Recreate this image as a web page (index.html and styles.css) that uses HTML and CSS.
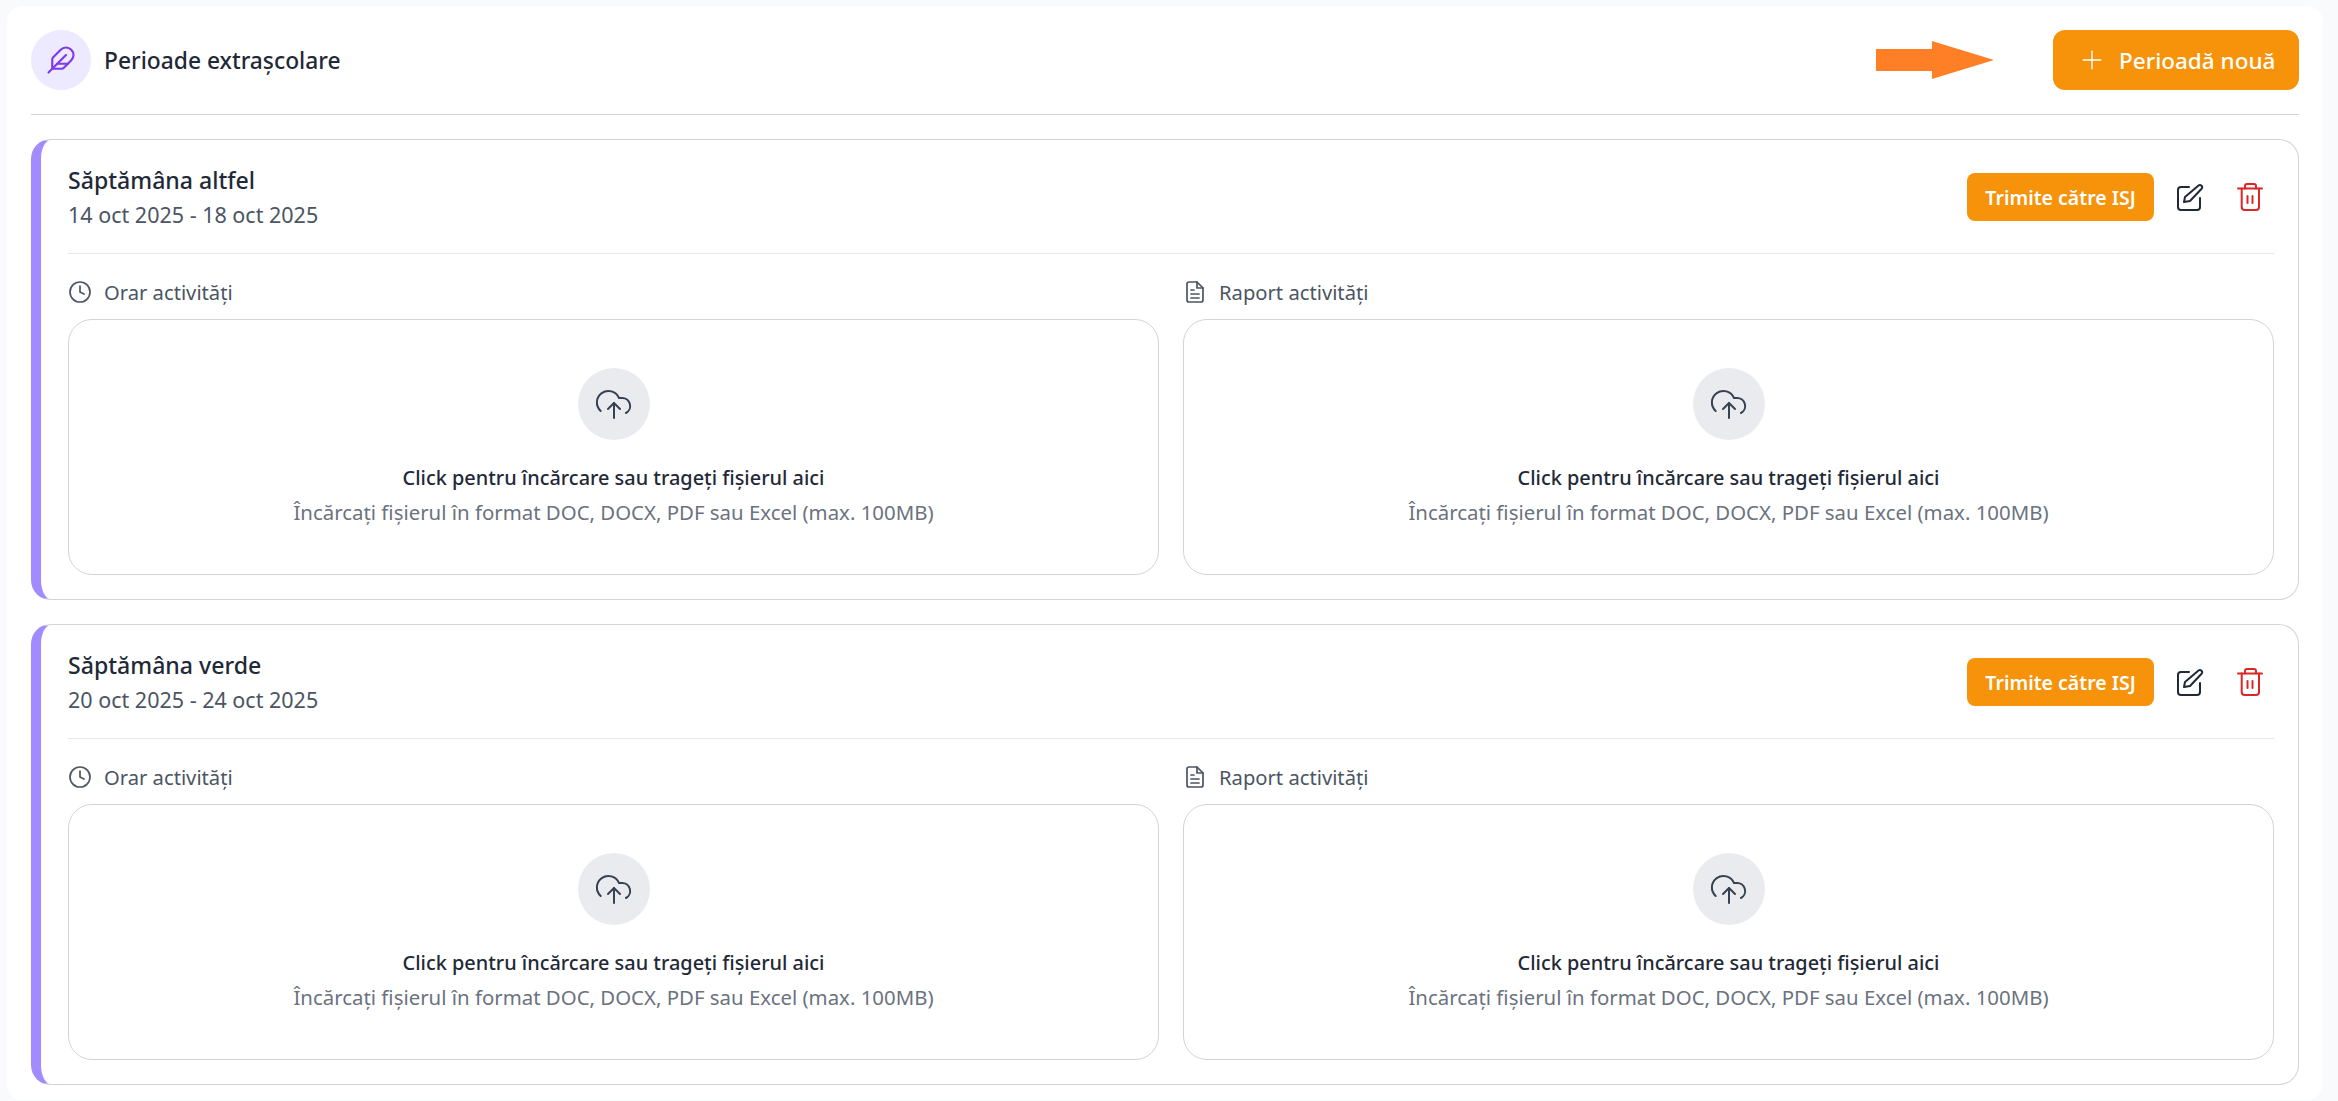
FILE: index.html
```html
<!DOCTYPE html>
<html lang="ro">
<head>
  <meta charset="UTF-8">
  <meta name="viewport" content="width=device-width, initial-scale=1.0">
  <title>Perioade extrașcolare</title>
  <link rel="stylesheet" href="styles.css">
</head>
<body>
  <svg class="icon-defs" width="0" height="0">
    <symbol id="i-feather" viewBox="0 0 24 24"><path d="M12.67 19a2 2 0 0 0 1.416-.588l6.154-6.172a6 6 0 0 0-8.49-8.49L5.586 9.914A2 2 0 0 0 5 11.328V18a1 1 0 0 0 1 1z"/><path d="M16 8 2 22"/><path d="M17.5 15H9"/></symbol>
    <symbol id="i-plus" viewBox="0 0 24 24"><path d="M12 2.5v19"/><path d="M2.500 12h19"/></symbol>
    <symbol id="i-edit" viewBox="0 0 28 28"><path d="M13 4H5a3 3 0 0 0-3 3v17a3 3 0 0 0 3 3h16a3 3 0 0 0 3-3v-9"/><path d="M8 19l1-5L22.500 2.600a2.200 2.200 0 0 1 3.100 3.100L14 18z"/></symbol>
    <symbol id="i-trash" viewBox="0 0 28 28"><path d="M2 5.500h24"/><path d="M5.700 5.500V24a3 3 0 0 0 3 3H20a3 3 0 0 0 3-3V5.500"/><path d="M9 5.500V3a2 2 0 0 1 2-2h7a2 2 0 0 1 2 2v2.500"/><path d="M11.500 13v7"/><path d="M16.500 13v7"/></symbol>
    <symbol id="i-clock" viewBox="0 0 24 24"><circle cx="12" cy="12" r="10"/><path d="M12 6v6l4 2"/></symbol>
    <symbol id="i-doc" viewBox="0 0 24 24"><path d="M14 2H6a2 2 0 0 0-2 2v16a2 2 0 0 0 2 2h12a2 2 0 0 0 2-2V8z"/><path d="M14 2v6h6"/><path d="M8 10h3"/><path d="M8 14h8"/><path d="M8 18h8"/></symbol>
    <symbol id="i-upload" viewBox="0 0 40 40"><path d="M6.700 27A11.500 11.500 0 1 1 25 14h3a8 8 0 0 1 4 15"/><path d="M20 19v15"/><path d="m14 25 6-6 6 6"/></symbol>
  </svg>

  <main class="panel">
    <header class="panel-head">
      <div class="panel-title">
        <span class="title-icon"><svg class="icon"><use href="#i-feather"/></svg></span>
        <h1>Perioade extrașcolare</h1>
      </div>
      <div class="panel-actions">
        <svg class="arrow" width="118" height="38" viewBox="0 0 118 38"><path d="M0 8h56V0l62 19-62 19v-8H0z"/></svg>
        <button class="btn-new"><svg class="icon"><use href="#i-plus"/></svg>Perioadă nouă</button>
      </div>
    </header>

    <section class="period">
      <div class="period-head">
        <div>
          <h2>Săptămâna altfel</h2>
          <p class="dates">14 oct 2025 - 18 oct 2025</p>
        </div>
        <div class="period-actions">
          <button class="btn-send">Trimite către ISJ</button>
          <svg class="icon icon-edit"><use href="#i-edit"/></svg>
          <svg class="icon icon-trash"><use href="#i-trash"/></svg>
        </div>
      </div>
      <div class="uploads">
        <div class="upload-col">
          <div class="upload-label"><svg class="icon"><use href="#i-clock"/></svg>Orar activități</div>
          <div class="dropzone">
            <span class="drop-icon"><svg class="icon"><use href="#i-upload"/></svg></span>
            <p class="drop-main">Click pentru încărcare sau trageți fișierul aici</p>
            <p class="drop-hint">Încărcați fișierul în format DOC, DOCX, PDF sau Excel (max. 100MB)</p>
          </div>
        </div>
        <div class="upload-col">
          <div class="upload-label"><svg class="icon"><use href="#i-doc"/></svg>Raport activități</div>
          <div class="dropzone">
            <span class="drop-icon"><svg class="icon"><use href="#i-upload"/></svg></span>
            <p class="drop-main">Click pentru încărcare sau trageți fișierul aici</p>
            <p class="drop-hint">Încărcați fișierul în format DOC, DOCX, PDF sau Excel (max. 100MB)</p>
          </div>
        </div>
      </div>
    </section>

    <section class="period">
      <div class="period-head">
        <div>
          <h2>Săptămâna verde</h2>
          <p class="dates">20 oct 2025 - 24 oct 2025</p>
        </div>
        <div class="period-actions">
          <button class="btn-send">Trimite către ISJ</button>
          <svg class="icon icon-edit"><use href="#i-edit"/></svg>
          <svg class="icon icon-trash"><use href="#i-trash"/></svg>
        </div>
      </div>
      <div class="uploads">
        <div class="upload-col">
          <div class="upload-label"><svg class="icon"><use href="#i-clock"/></svg>Orar activități</div>
          <div class="dropzone">
            <span class="drop-icon"><svg class="icon"><use href="#i-upload"/></svg></span>
            <p class="drop-main">Click pentru încărcare sau trageți fișierul aici</p>
            <p class="drop-hint">Încărcați fișierul în format DOC, DOCX, PDF sau Excel (max. 100MB)</p>
          </div>
        </div>
        <div class="upload-col">
          <div class="upload-label"><svg class="icon"><use href="#i-doc"/></svg>Raport activități</div>
          <div class="dropzone">
            <span class="drop-icon"><svg class="icon"><use href="#i-upload"/></svg></span>
            <p class="drop-main">Click pentru încărcare sau trageți fișierul aici</p>
            <p class="drop-hint">Încărcați fișierul în format DOC, DOCX, PDF sau Excel (max. 100MB)</p>
          </div>
        </div>
      </div>
    </section>
  </main>
</body>
</html>
```

FILE: styles.css
```css
html, body {
  height: 100%;
}

body {
  font-family: 'Noto Sans', sans-serif;
  background: #f9fafb;
  color: #1f2937;
  margin: 0;
  padding: 6px 15px 0 7px;
  box-sizing: border-box;
  overflow: hidden;
}

h1, h2, p {
  margin: 0;
  font-weight: 500;
}

button {
  font-family: inherit;
  border: none;
  color: #fff;
  background: #f7930a;
}

.icon-defs {
  position: absolute;
}

.icon {
  display: block;
  fill: none;
  stroke: currentColor;
  stroke-width: 1.7;
  stroke-linecap: round;
  stroke-linejoin: round;
}

.panel {
  background: #fff;
  border-radius: 16px;
  padding: 24px 24px 16px;
  height: 1094px;
  box-sizing: border-box;
}

.panel-head {
  display: flex;
  justify-content: space-between;
  align-items: center;
  padding-bottom: 24px;
  border-bottom: 1px solid #d1d5db;
  margin-bottom: 24px;
}

.panel-title {
  display: flex;
  align-items: center;
  gap: 13px;
}

.title-icon {
  width: 60px;
  height: 60px;
  border-radius: 50%;
  background: #ede9fe;
  color: #7c3aed;
  display: flex;
  align-items: center;
  justify-content: center;
}

.title-icon .icon {
  width: 30px;
  height: 30px;
}

h1 {
  font-size: 22.8px;
  color: #1f2937;
}

.panel-actions {
  display: flex;
  align-items: center;
  gap: 59px;
}

.arrow {
  fill: #ff7f27;
}

.btn-new {
  display: flex;
  align-items: center;
  gap: 16px;
  width: 246px;
  height: 60px;
  padding: 0 0 0 28px;
  border-radius: 12px;
  font-size: 22.5px;
  font-weight: 500;
}

.btn-new .icon {
  width: 22px;
  height: 22px;
  stroke-width: 1.5;
}

.period {
  border: 1px solid #d1d5db;
  border-left: 10px solid #a08cff;
  border-radius: 20px;
  padding: 24px 24px 24px 27px;
  margin-bottom: 24px;
  height: 461px;
  box-sizing: border-box;
}

.period-head {
  display: flex;
  justify-content: space-between;
  align-items: flex-start;
  height: 90px;
  box-sizing: border-box;
  border-bottom: 1px solid #e5e7eb;
}

h2 {
  font-size: 23.1px;
  line-height: 32px;
  color: #1f2937;
}

.dates {
  font-size: 21.5px;
  line-height: 28px;
  margin-top: 5px;
  font-weight: 400;
  color: #4b5563;
}

.period-actions {
  display: flex;
  align-items: center;
  margin-top: 9px;
}

.btn-send {
  width: 187px;
  height: 48px;
  padding: 0;
  border-radius: 8px;
  font-size: 19.5px;
  font-weight: 600;
  margin-right: 22px;
}

.icon-edit {
  width: 28px;
  height: 28px;
  stroke-width: 2;
  color: #1f2937;
  margin-right: 32px;
}

.icon-trash {
  width: 28px;
  height: 28px;
  stroke-width: 2;
  color: #dc2626;
  margin-right: 10px;
}

.uploads {
  display: grid;
  grid-template-columns: 1fr 1fr;
  gap: 24px;
  padding-top: 24px;
}

.upload-label {
  display: flex;
  align-items: center;
  gap: 12px;
  height: 28px;
  margin-bottom: 13px;
  font-size: 20.2px;
  font-weight: 400;
  color: #4b5563;
}

.upload-label .icon {
  width: 24px;
  height: 24px;
}

.dropzone {
  height: 256px;
  box-sizing: border-box;
  border: 1px solid #d1d5db;
  border-radius: 24px;
  padding-top: 48px;
  display: flex;
  flex-direction: column;
  align-items: center;
}

.drop-icon {
  width: 72px;
  height: 72px;
  border-radius: 50%;
  background: #e9ebef;
  color: #374151;
  display: flex;
  align-items: center;
  justify-content: center;
  margin-bottom: 24px;
}

.drop-icon .icon {
  width: 40px;
  height: 40px;
  stroke-width: 2;
}

.drop-main {
  font-size: 19.9px;
  line-height: 28px;
  font-weight: 500;
  color: #1f2937;
}

.drop-hint {
  font-size: 20.4px;
  line-height: 28px;
  margin-top: 6px;
  font-weight: 400;
  color: #6b7280;
}
```
